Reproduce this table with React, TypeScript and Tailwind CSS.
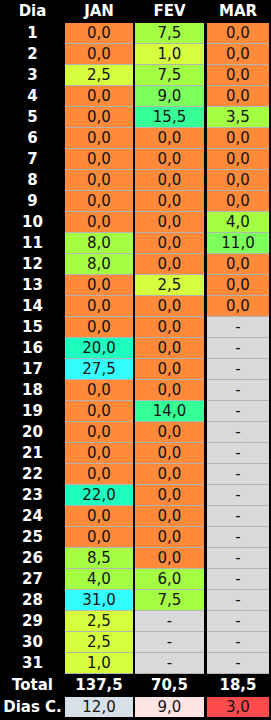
const jan: (number | null)[] = [0, 0, 2.5, 0, 0, 0, 0, 0, 0, 0, 8, 8, 0, 0, 0, 20, 27.5, 0, 0, 0, 0, 0, 22, 0, 0, 8.5, 4, 31, 2.5, 2.5, 1];
const fev: (number | null)[] = [7.5, 1, 7.5, 9, 15.5, 0, 0, 0, 0, 0, 0, 0, 2.5, 0, 0, 0, 0, 0, 14, 0, 0, 0, 0, 0, 0, 0, 6, 7.5, null, null, null];
const mar: (number | null)[] = [0, 0, 0, 0, 3.5, 0, 0, 0, 0, 4, 11, 0, 0, 0, ...Array(17).fill(null)];

function cellColor(v: number | null) {
  if (v === null) return "bg-[#d9d9d9]";
  if (v === 0) return "bg-[#ff8a3a]";
  if (v < 3) return "bg-[#d6ff3e]";
  if (v < 9) return "bg-[#a4ff44]";
  if (v < 14) return "bg-[#7dff5c]";
  if (v < 20) return "bg-[#36ff96]";
  if (v < 25) return "bg-[#1cffbe]";
  return "bg-[#33ffff]";
}

const fmt = (v: number | null) => (v === null ? "-" : v.toFixed(1).replace(".", ","));

function Cell({ v, w }: { v: number | null; w: string }) {
  return (
    <div className={`${w} h-[21px] border-b border-[#b4b4b4] ${cellColor(v)} text-center text-[15px] leading-[20px] text-[#111]`}>
      {fmt(v)}
    </div>
  );
}

export default function App() {
  return (
    <div className="w-[271px] h-[720px] bg-black" style={{ fontFamily: '"DejaVu Sans", Verdana, sans-serif' }}>
      {/* header */}
      <div className="flex h-[23px] items-center text-white font-bold text-[15px]">
        <div className="w-[65px] text-center">Dia</div>
        <div className="w-[68px] text-center">JAN</div>
        <div className="w-[69px] ml-[2px] text-center">FEV</div>
        <div className="w-[62px] ml-[3px] text-center">MAR</div>
      </div>

      {jan.map((_, i) => (
        <div key={i} className="flex">
          <div className="w-[65px] h-[21px] text-center text-white font-bold text-[15px] leading-[20px]">{i + 1}</div>
          <Cell v={jan[i]} w="w-[68px]" />
          <div className="w-[2px]" />
          <Cell v={fev[i]} w="w-[69px]" />
          <div className="w-[3px]" />
          <Cell v={mar[i]} w="w-[62px]" />
        </div>
      ))}

      {/* Total */}
      <div className="flex h-[23px] items-center text-white font-bold text-[15px]">
        <div className="w-[65px] text-center">Total</div>
        <div className="w-[68px] text-center">137,5</div>
        <div className="w-[69px] ml-[2px] text-center">70,5</div>
        <div className="w-[62px] ml-[3px] text-center">18,5</div>
      </div>

      {/* Dias C. */}
      <div className="flex h-[20px] text-[15px] leading-[20px]">
        <div className="w-[65px] text-center text-white font-bold whitespace-nowrap">Dias C.</div>
        <div className="w-[68px] text-center bg-[#d7dfe9] text-[#111]">12,0</div>
        <div className="w-[69px] ml-[2px] text-center bg-[#ffe4e4] text-[#111]">9,0</div>
        <div className="w-[62px] ml-[3px] text-center bg-[#ff4b4b] text-[#111]">3,0</div>
      </div>
    </div>
  );
}
